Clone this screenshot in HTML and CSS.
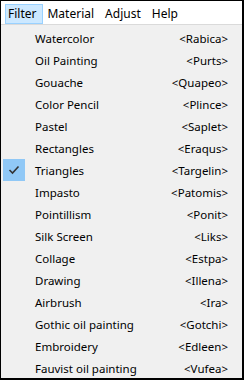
FILE: index.html
```html
<!DOCTYPE html>
<html>
<head>
<meta charset="utf-8">
<link rel="stylesheet" href="styles.css">
</head>
<body>
<div class="window">
  <div class="menubar">
    <div class="mb-item active">Filter</div>
    <div class="mb-item">Material</div>
    <div class="mb-item">Adjust</div>
    <div class="mb-item">Help</div>
  </div>
  <div class="menu">
    <div class="row"><span class="check"></span><span class="label">Watercolor</span><span class="key">&lt;Rabica&gt;</span></div>
    <div class="row"><span class="check"></span><span class="label">Oil Painting</span><span class="key">&lt;Purts&gt;</span></div>
    <div class="row"><span class="check"></span><span class="label">Gouache</span><span class="key">&lt;Quapeo&gt;</span></div>
    <div class="row"><span class="check"></span><span class="label">Color Pencil</span><span class="key">&lt;Plince&gt;</span></div>
    <div class="row"><span class="check"></span><span class="label">Pastel</span><span class="key">&lt;Saplet&gt;</span></div>
    <div class="row"><span class="check"></span><span class="label">Rectangles</span><span class="key">&lt;Eraqus&gt;</span></div>
    <div class="row"><span class="check on"><svg width="12" height="10" viewBox="0 0 12 10"><path d="M1.5 5 L4.5 8 L10.5 1.5" fill="none" stroke="#333" stroke-width="1.6"/></svg></span><span class="label">Triangles</span><span class="key">&lt;Targelin&gt;</span></div>
    <div class="row"><span class="check"></span><span class="label">Impasto</span><span class="key">&lt;Patomis&gt;</span></div>
    <div class="row"><span class="check"></span><span class="label">Pointillism</span><span class="key">&lt;Ponit&gt;</span></div>
    <div class="row"><span class="check"></span><span class="label">Silk Screen</span><span class="key">&lt;Liks&gt;</span></div>
    <div class="row"><span class="check"></span><span class="label">Collage</span><span class="key">&lt;Estpa&gt;</span></div>
    <div class="row"><span class="check"></span><span class="label">Drawing</span><span class="key">&lt;Illena&gt;</span></div>
    <div class="row"><span class="check"></span><span class="label">Airbrush</span><span class="key">&lt;Ira&gt;</span></div>
    <div class="row"><span class="check"></span><span class="label">Gothic oil painting</span><span class="key">&lt;Gotchi&gt;</span></div>
    <div class="row"><span class="check"></span><span class="label">Embroidery</span><span class="key">&lt;Edleen&gt;</span></div>
    <div class="row"><span class="check"></span><span class="label">Fauvist oil painting</span><span class="key">&lt;Vufea&gt;</span></div>
  </div>
</div>
</body>
</html>
```
FILE: styles.css
```css
html, body {
  margin: 0;
  padding: 0;
  background: #ffffff;
}
body {
  font-family: "Noto Sans", "Open Sans", sans-serif;
  font-size: 11.5px;
  color: #000;
}
.window {
  width: 244px;
  height: 380px;
  box-sizing: border-box;
  border-style: solid;
  border-color: #000;
  border-width: 1px 2px 2px 1px;
  display: flex;
  flex-direction: column;
  background: #f0f0f0;
  overflow: hidden;
}
.menubar {
  display: flex;
  background: #fff;
  padding: 3px 0 0 4px;
  height: 20px;
  border-bottom: 1px solid #dadada;
}
.mb-item {
  height: 20px;
  box-sizing: border-box;
  padding: 0 6px 0 2px;
  margin-right: 1px;
  line-height: 18px;
  border: 1px solid transparent;
  font-size: 12px;
}
.mb-item.active {
  background: #cce8ff;
  border-color: #99d1ff;
}
.menu {
  padding: 2px 0 0 2px;
  display: flex;
  flex-direction: column;
}
.row {
  display: flex;
  align-items: center;
  height: 22px;
}
.check {
  width: 22px;
  height: 22px;
  display: flex;
  align-items: center;
  justify-content: center;
  margin-right: 10px;
}
.check.on {
  background: #90c8f6;
}
.label {
  flex: 1;
}
.key {
  margin-right: 14px;
}
```
